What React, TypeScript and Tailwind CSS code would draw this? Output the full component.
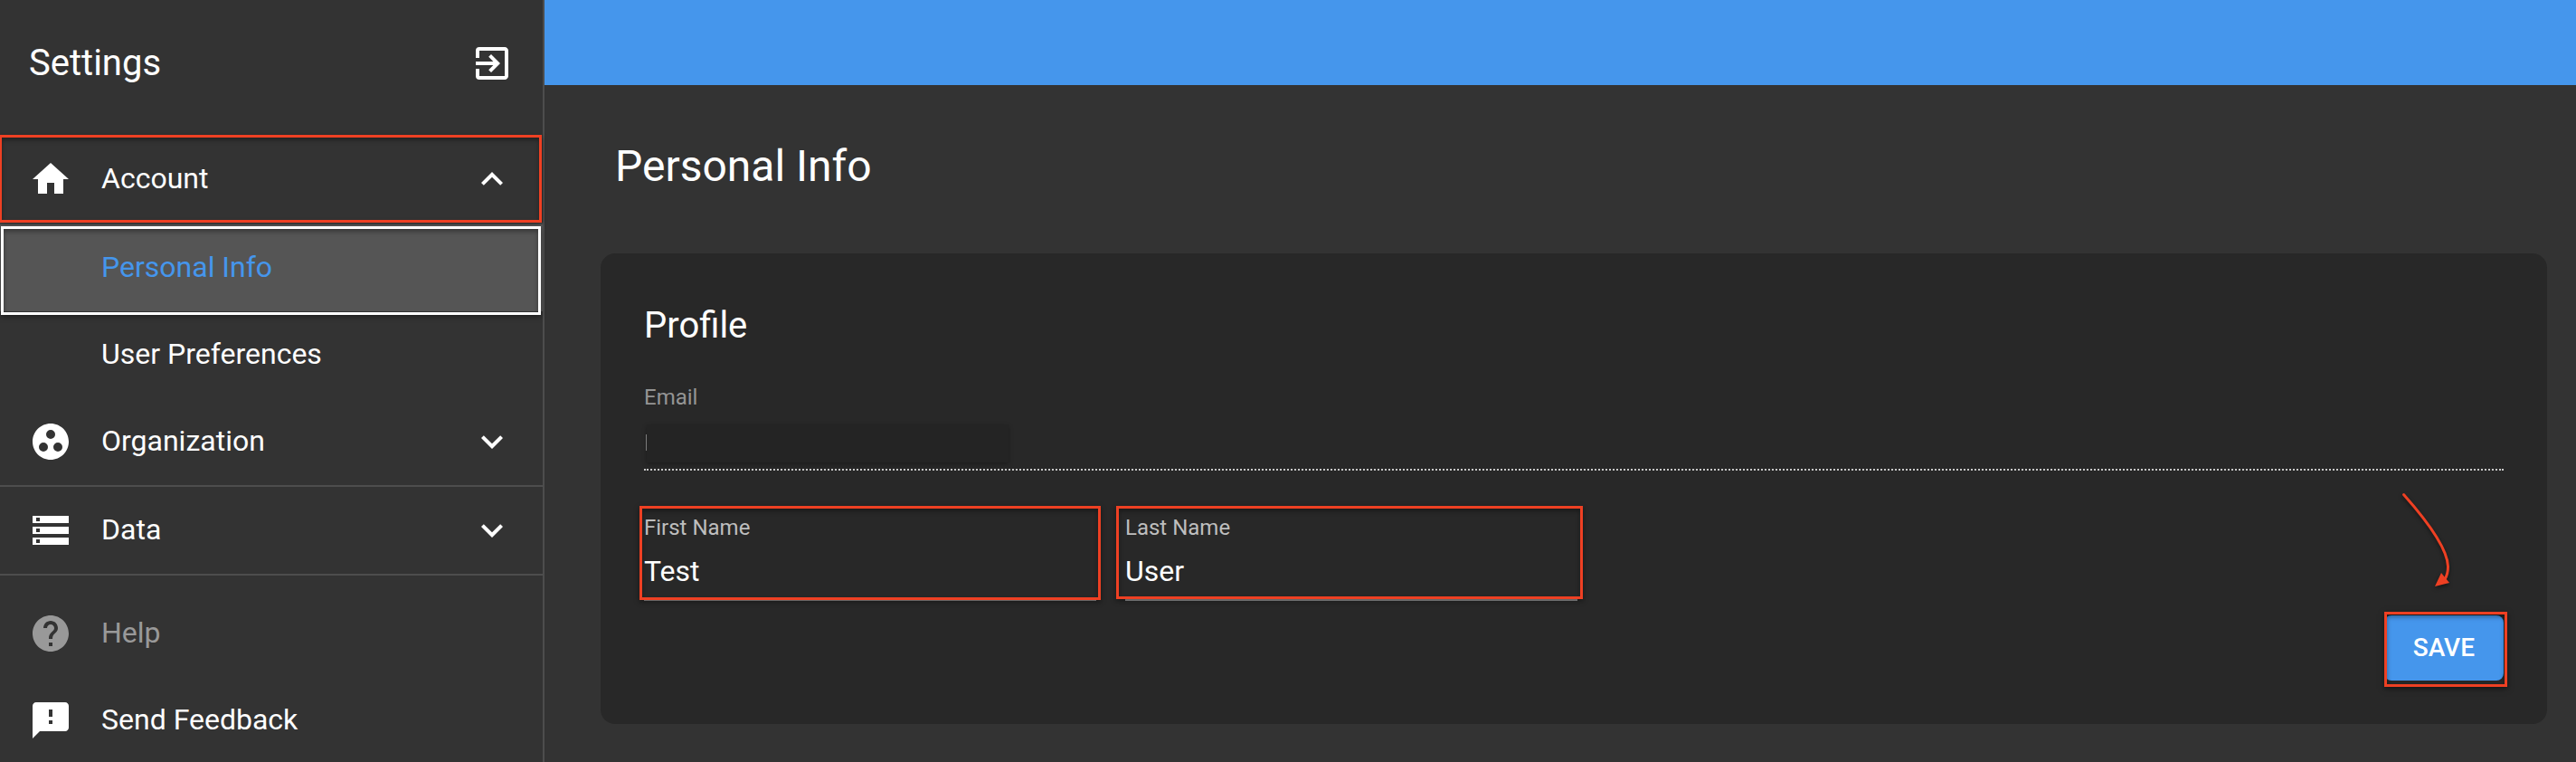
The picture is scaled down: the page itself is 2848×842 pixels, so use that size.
import React, { useState } from 'react'
import clsx from 'clsx'
import {
  MdHome,
  MdGroupWork,
  MdStorage,
  MdHelp,
  MdFeedback,
  MdExitToApp,
  MdExpandLess,
  MdExpandMore,
} from 'react-icons/md'

interface NavSectionProps {
  icon: React.ReactNode
  label: string
  expanded?: boolean
  onToggle?: () => void
  highlighted?: boolean
}

function NavSection({ icon, label, expanded, onToggle, highlighted }: NavSectionProps) {
  return (
    <button
      type="button"
      onClick={onToggle}
      aria-expanded={expanded}
      className="relative flex h-[98px] w-full items-center gap-8 border-b-2 border-[#4d4d4d] px-8 text-left"
    >
      {icon}
      <span className="flex-1 pb-0.5">{label}</span>
      {expanded ? <MdExpandLess className="size-12" /> : <MdExpandMore className="size-12" />}
      {highlighted && (
        <span className="pointer-events-none absolute -top-px right-px -left-px h-[97px] border-3 border-[#ee4023] shadow-[0_2px_6px_rgba(0,0,0,0.45),inset_0_3px_5px_rgba(0,0,0,0.35)]" />
      )}
    </button>
  )
}

function Sidebar() {
  const [accountOpen, setAccountOpen] = useState(true)
  const [orgOpen, setOrgOpen] = useState(false)
  const [dataOpen, setDataOpen] = useState(false)

  return (
    <aside className="w-[602px] shrink-0 border-r-2 border-[#4d4d4d] text-[32px] leading-10">
      <div className="flex h-[150px] items-center justify-between px-8 pb-2.5">
        <h2 className="text-[40px] leading-12">Settings</h2>
        <button type="button" aria-label="Exit settings">
          <MdExitToApp className="size-12" />
        </button>
      </div>

      <nav>
        <NavSection
          icon={<MdHome className="size-12" />}
          label="Account"
          expanded={accountOpen}
          onToggle={() => setAccountOpen(!accountOpen)}
          highlighted
        />
        {accountOpen && (
          <>
            <a href="#personal-info" className="relative flex h-24 items-center bg-[#555555] pb-0.5 pl-28 text-[#4596ec]">
              Personal Info
              <span className="pointer-events-none absolute top-0.5 right-0.5 left-px h-[98px] border-3 border-white shadow-[0_2px_6px_rgba(0,0,0,0.45),inset_0_3px_5px_rgba(0,0,0,0.35)]" />
            </a>
            <a href="#user-preferences" className="flex h-24 items-center pb-0.5 pl-28">
              User Preferences
            </a>
          </>
        )}
        <NavSection
          icon={<MdGroupWork className="size-12" />}
          label="Organization"
          expanded={orgOpen}
          onToggle={() => setOrgOpen(!orgOpen)}
        />
        <NavSection
          icon={<MdStorage className="size-12" />}
          label="Data"
          expanded={dataOpen}
          onToggle={() => setDataOpen(!dataOpen)}
        />
        <div className="pt-4">
          <a href="#help" className="flex h-24 items-center gap-8 px-8 text-[#999999]">
            <MdHelp className="size-12" />
            <span className="pb-0.5">Help</span>
          </a>
          <a href="#feedback" className="flex h-24 items-center gap-8 px-8">
            <MdFeedback className="size-12" />
            <span className="pb-0.5">Send Feedback</span>
          </a>
        </div>
      </nav>
    </aside>
  )
}

interface NameFieldProps {
  id: string
  label: string
  defaultValue: string
  outlineClass: string
}

function NameField({ id, label, defaultValue, outlineClass }: NameFieldProps) {
  return (
    <div className="relative flex w-[500px] flex-col">
      <label htmlFor={id} className="text-2xl leading-8 text-[#bebebe]">
        {label}
      </label>
      <input
        id={id}
        type="text"
        defaultValue={defaultValue}
        className="mt-3 h-[53px] border-b-2 border-[#949494] bg-transparent pb-3 text-[32px] leading-10 outline-none"
      />
      <span
        className={clsx(
          'pointer-events-none absolute border-3 border-[#ee4023] shadow-[0_2px_6px_rgba(0,0,0,0.45),inset_0_3px_5px_rgba(0,0,0,0.35)]',
          outlineClass
        )}
      />
    </div>
  )
}

function ProfileCard() {
  return (
    <form
      onSubmit={(e) => e.preventDefault()}
      className="flex flex-col rounded-2xl bg-[#282828] p-12"
    >
      <h2 className="mt-2 text-[40px] leading-12">Profile</h2>

      <div className="relative mt-[39px] flex flex-col">
        <label htmlFor="email" className="text-2xl leading-8 text-[#949494]">
          Email
        </label>
        <input
          id="email"
          type="email"
          readOnly
          className="h-[65px] border-b-2 border-dotted border-[#c9c9c9] bg-transparent text-2xl outline-none"
        />
        {/* masked address */}
        <span className="absolute bottom-[22px] left-0.5 h-[18px] w-px bg-[#8f8f8f]" />
        <span className="absolute bottom-[9px] left-[3px] h-[42px] w-[400px] bg-[#242424] shadow-[0_2px_5px_rgba(0,0,0,0.3)]" />
      </div>

      <div className="mt-[47px] flex gap-8">
        <NameField
          id="first-name"
          label="First Name"
          defaultValue="Test"
          outlineClass="-top-2 -right-[5px] bottom-px -left-[5px]"
        />
        <NameField
          id="last-name"
          label="Last Name"
          defaultValue="User"
          outlineClass="-top-2 -right-1.5 bottom-0.5 -left-2.5"
        />
      </div>

      <div className="relative mt-4 flex self-end">
        <button
          type="submit"
          className="h-18 rounded-lg bg-[#4596ec] px-8 text-[28px] leading-10 font-medium"
        >
          SAVE
        </button>
        <span className="pointer-events-none absolute -top-1 -right-1 -bottom-[7px] left-0 border-3 border-[#ee4023] shadow-[0_2px_6px_rgba(0,0,0,0.5),inset_0_3px_5px_rgba(0,0,0,0.35)]" />
        <svg
          viewBox="0 0 60 110"
          fill="none"
          className="pointer-events-none absolute right-[58px] bottom-[100px] h-[110px] w-[60px] drop-shadow-[0_2px_2px_rgba(0,0,0,0.5)]"
        >
          <path
            d="M7.5 4.5C31 31 56 64 56.5 84C56.5 90 55.5 94 53 98"
            stroke="#ee4023"
            strokeWidth="3"
            strokeLinecap="round"
          />
          <path d="M42 106L49 91L58 102Z" fill="#ee4023" />
        </svg>
      </div>
    </form>
  )
}

export default function App() {
  return (
    <div className="flex h-screen overflow-hidden bg-[#333333] font-['Roboto',sans-serif] text-white">
      <Sidebar />
      <div className="min-w-0 flex-1">
        <header className="h-[94px] bg-[#4596ec]" />
        <main className="pt-[62px] pr-8 pl-[62px]">
          <h1 className="mb-[68px] pl-4 text-5xl leading-14">Personal Info</h1>
          <ProfileCard />
        </main>
      </div>
    </div>
  )
}
